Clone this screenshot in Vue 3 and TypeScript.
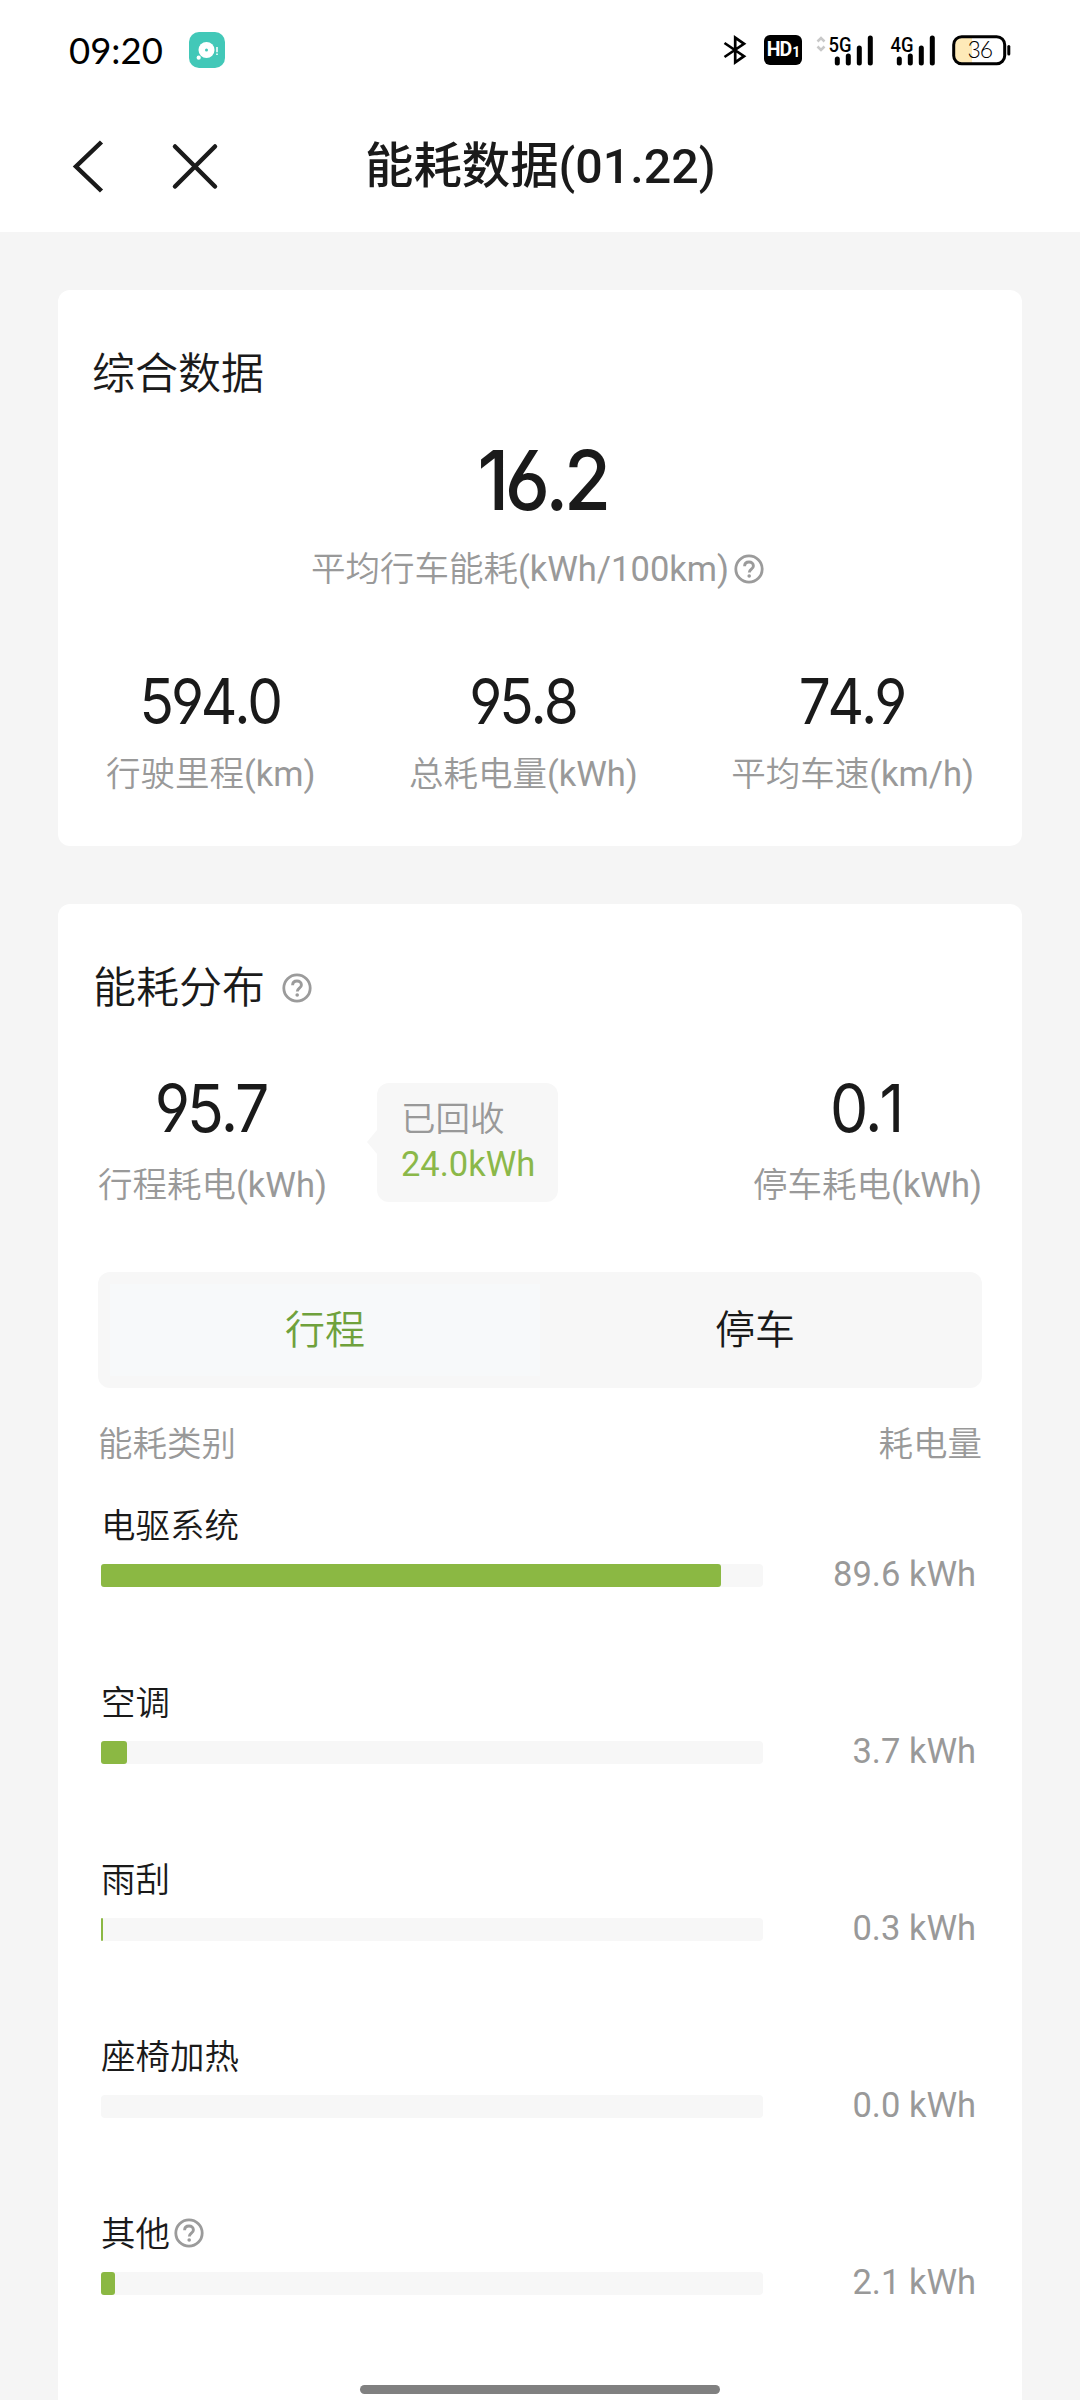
<script setup lang="ts">
import { h, ref } from 'vue'

interface Stat { value: string; label: string }
interface Usage { name: string; value: string; width: number; help?: boolean }

const stats: Stat[] = [
  { value: '594.0', label: '行驶里程(km)' },
  { value: '95.8', label: '总耗电量(kWh)' },
  { value: '74.9', label: '平均车速(km/h)' },
]

const usages: Usage[] = [
  { name: '电驱系统', value: '89.6', width: 620 },
  { name: '空调', value: '3.7', width: 26 },
  { name: '雨刮', value: '0.3', width: 2 },
  { name: '座椅加热', value: '0.0', width: 0 },
  { name: '其他', value: '2.1', width: 14, help: true },
]

const tabs = ['行程', '停车']
const active = ref(0)

const HelpIcon = () =>
  h('svg', { width: 30, height: 30, viewBox: '0 0 30 30', fill: 'none', stroke: '#9b9b9b' }, [
    h('circle', { cx: 15, cy: 15, r: 13.2, 'stroke-width': 2.8 }),
    h('path', { d: 'M10.6 12.2C10.6 9.6 12.4 8 15 8s4.4 1.6 4.4 3.9c0 3.2-4.1 3.3-4.1 6.6', 'stroke-width': 2.9 }),
    h('circle', { cx: 15.2, cy: 22, r: 1.8, fill: '#9b9b9b', stroke: 'none' }),
  ])
</script>

<template>
  <div class="screen">
    <header class="top">
      <div class="status">
        <span class="clock">09:20</span>
        <svg class="app-icon" width="36" height="36" viewBox="0 0 36 36">
          <rect width="36" height="36" rx="10" fill="#42c8b8" />
          <circle cx="17.5" cy="18" r="8" fill="#fff" />
          <circle cx="17.5" cy="18" r="1.5" fill="#42c8b8" />
          <circle cx="9.7" cy="25.7" r="2.1" fill="#fff" />
          <path d="M28 15v5.2M28 21.5v1.6" stroke="#fff" stroke-width="1.5" />
        </svg>
        <svg class="bt" width="24" height="32" viewBox="0 0 24 32" fill="none" stroke="#000" stroke-width="2.7">
          <path d="M1.5 9 21 22.2 12.2 28.3V3.7L21 9.8 1.5 23" />
        </svg>
        <div class="hd"><span>HD</span><span class="sim">1</span></div>
        <svg class="net5" width="58" height="42" viewBox="0 -10 58 42">
          <path d="M1.5 6.5 5 3l3.5 3.5M1.5 11.5 5 15l3.5-3.5" fill="none" stroke="#c8c8c8" stroke-width="2.5" />
          <text x="12.5" y="16.5" font-size="20" font-weight="500" textLength="23" lengthAdjust="spacingAndGlyphs">5G</text>
          <path d="M21.3 24v4M32.3 21v7M43.3 13v15M54.3 3v25" stroke="#000" stroke-width="5" stroke-linecap="round" />
        </svg>
        <svg class="net4" width="46" height="42" viewBox="0 -10 46 42">
          <text x="0.5" y="16.5" font-size="20" font-weight="500" textLength="23" lengthAdjust="spacingAndGlyphs">4G</text>
          <path d="M9.3 24v4M20.3 21v7M31.3 13v15M42.3 3v25" stroke="#000" stroke-width="5" stroke-linecap="round" />
        </svg>
        <svg class="battery" width="60" height="32" viewBox="0 0 60 32">
          <path d="M10 3H20V28H10Q3 28 3 21V10Q3 3 10 3" fill="#feeab8" />
          <rect x="1.7" y="1.7" width="51" height="27" rx="8" fill="none" stroke="#000" stroke-width="3" />
          <path d="M56.8 11.5v7.5" stroke="#000" stroke-width="3" stroke-linecap="round" />
          <text x="15.5" y="23" class="level">36</text>
        </svg>
      </div>
      <nav class="nav">
        <svg width="160" height="60" viewBox="0 0 160 60" fill="none" stroke="#1a1a1a" stroke-width="4.5">
          <path d="M36.5 6 11 30.5 36.5 55" />
          <path d="M110 10.5 150 50.5M150 10.5 110 50.5" stroke-linecap="round" />
        </svg>
        <h1>能耗数据(01.22)</h1>
      </nav>
    </header>

    <section class="card summary">
      <h2>综合数据</h2>
      <div class="big">16.2</div>
      <div class="label average">平均行车能耗(kWh/100km)<HelpIcon /></div>
      <div class="stats">
        <div v-for="s in stats" :key="s.label" class="stat">
          <div class="num">{{ s.value }}</div>
          <div class="label">{{ s.label }}</div>
        </div>
      </div>
    </section>

    <section class="card detail">
      <h2>能耗分布<HelpIcon /></h2>
      <div class="split">
        <div class="stat">
          <div class="num">95.7</div>
          <div class="label">行程耗电(kWh)</div>
        </div>
        <div class="bubble">
          <div>已回收</div>
          <div class="recovered">24.0kWh</div>
        </div>
        <div class="stat parked">
          <div class="num">0.1</div>
          <div class="label">停车耗电(kWh)</div>
        </div>
      </div>
      <div class="tabs">
        <div v-for="(t, i) in tabs" :key="t" class="tab" :class="{ on: i === active }" @click="active = i">{{ t }}</div>
      </div>
      <div class="columns label"><span>能耗类别</span><span>耗电量</span></div>
      <div v-for="u in usages" :key="u.name" class="usage">
        <div class="name">{{ u.name }}<HelpIcon v-if="u.help" /></div>
        <div class="line">
          <div class="track"><div class="fill" :style="{ width: u.width + 'px' }"></div></div>
          <span class="value">{{ u.value }} kWh</span>
        </div>
      </div>
    </section>
    <div class="home"></div>
  </div>
</template>

<style>
body {
  margin: 0;
  background: #f5f5f5;
}
</style>

<style scoped>
.screen {
  position: relative;
  width: 1080px;
  height: 2400px;
  overflow: hidden;
  background: #f5f5f5;
  color: #1a1a1a;
  font-family: Roboto, "Noto Sans CJK SC DemiLight", "Noto Sans CJK SC", sans-serif;
}
.top {
  height: 232px;
  background: #fff;
}
.status {
  display: flex;
  height: 100px;
  align-items: center;
}
.clock {
  width: 93px;
  margin-left: 69px;
  font: 36.5px/40px Lato, sans-serif;
  color: #000;
}
.app-icon { margin-left: 27px; }
.bt { margin-left: 498px; }
.hd {
  display: flex;
  box-sizing: border-box;
  justify-content: center;
  gap: 1px;
  width: 38px;
  height: 30px;
  margin-left: 17px;
  border-radius: 6px;
  background: #000;
  color: #fff;
  font-size: 19.5px;
  font-weight: 700;
  line-height: 30px;
  letter-spacing: -1px;
}
.sim {
  font-size: 14px;
  line-height: 34px;
}
.net5 { margin: -8px 0 0 14px; }
.net4 { margin: -8px 0 0 16px; }
.battery { margin: 2px 0 0 16px; }
.level {
  font: 300 23px Lato, sans-serif;
  letter-spacing: -1px;
}
.nav {
  display: flex;
  height: 132px;
  padding-left: 65px;
  align-items: center;
}
h1 {
  margin: 2px 0 0 140px;
  font-family: Roboto, "Noto Sans CJK SC", sans-serif;
  font-size: 48.4px;
  font-weight: 500;
  line-height: 60px;
}
.card {
  box-sizing: border-box;
  width: 964px;
  margin: 58px auto 0;
  border-radius: 12px;
  background: #fff;
}
.summary {
  height: 556px;
  padding: 54px 48px 0;
}
.detail {
  height: 1510px;
  padding: 54px 40px 0;
}
h2 {
  display: flex;
  align-items: center;
  gap: 17px;
  margin: 0;
  font-size: 43px;
  font-weight: 400;
  line-height: 60px;
}
.summary h2 { margin-left: -14px; }
.detail h2 { margin-left: -5px; }
.big, .num {
  font-family: Inter, sans-serif;
  font-weight: 400;
  font-feature-settings: "cv03", "cv04";
  font-kerning: none;
  text-align: center;
}
.big {
  margin-top: 35px;
  font-size: 83px;
  font-weight: 500;
  line-height: 82px;
  letter-spacing: -5px;
  transform: translateX(2px) scaleX(0.92);
}
.label {
  font-size: 34.5px;
  font-weight: 400;
  line-height: 40px;
  color: #999;
  white-space: nowrap;
}
.average {
  display: flex;
  justify-content: center;
  align-items: center;
  gap: 5px;
  margin: 28px 5px 0 0;
}
.stats {
  display: flex;
  justify-content: space-between;
  margin-top: 80px;
}
.num {
  font-size: 63px;
  line-height: 64px;
  letter-spacing: -3.5px;
  transform: translateX(-1px) scaleX(0.9);
}
.stats .label { margin-top: 21px; }
.split {
  display: flex;
  margin-top: 58px;
}
.split .num {
  font-size: 66px;
  transform: translateX(-2px) scaleX(0.92);
}
.split .label { margin-top: 25px; }
.bubble {
  position: relative;
  box-sizing: border-box;
  width: 181px;
  height: 119px;
  margin: 7px 0 0 50px;
  padding: 14px 0 0 24px;
  border-radius: 12px;
  background: #f7f7f7;
  color: #999;
  font-size: 34.5px;
  font-weight: 400;
  line-height: 45px;
}
.bubble::before {
  content: "";
  position: absolute;
  left: -10px;
  top: 47px;
  border: solid transparent;
  border-width: 12px 10px 12px 0;
  border-right-color: #f7f7f7;
}
.recovered {
  color: #8bb849;
  font-weight: 400;
}
.parked { margin-left: auto; }
.tabs {
  display: flex;
  height: 92px;
  margin-top: 67px;
  padding: 12px;
  border-radius: 12px;
  background: #f7f7f7;
}
.tab {
  flex: 1;
  text-align: center;
  font-size: 40px;
  font-weight: 400;
  line-height: 93px;
}
.tab.on {
  background: #f7f9fa;
  color: #6fa13c;
}
.columns {
  display: flex;
  justify-content: space-between;
  margin-top: 36px;
}
.usage {
  height: 177px;
  padding-left: 3px;
}
.name {
  display: flex;
  align-items: center;
  gap: 4px;
  height: 40px;
  padding-top: 42px;
  font-size: 34.5px;
  font-weight: 400;
  line-height: 40px;
}
.name svg { margin-top: -2px; }
.line {
  display: flex;
  justify-content: space-between;
  align-items: center;
  height: 23px;
  margin-top: 18px;
  padding-right: 6px;
}
.track {
  width: 662px;
  height: 23px;
  border-radius: 4px;
  background: #f7f7f7;
}
.fill {
  height: 100%;
  border-radius: 3px;
  background: #8bb843;
}
.value {
  margin-top: -4px;
  font-size: 34.5px;
  color: #999;
}
.home {
  position: absolute;
  left: 360px;
  top: 2385px;
  width: 360px;
  height: 9px;
  border-radius: 5px;
  background: #808080;
}
</style>
